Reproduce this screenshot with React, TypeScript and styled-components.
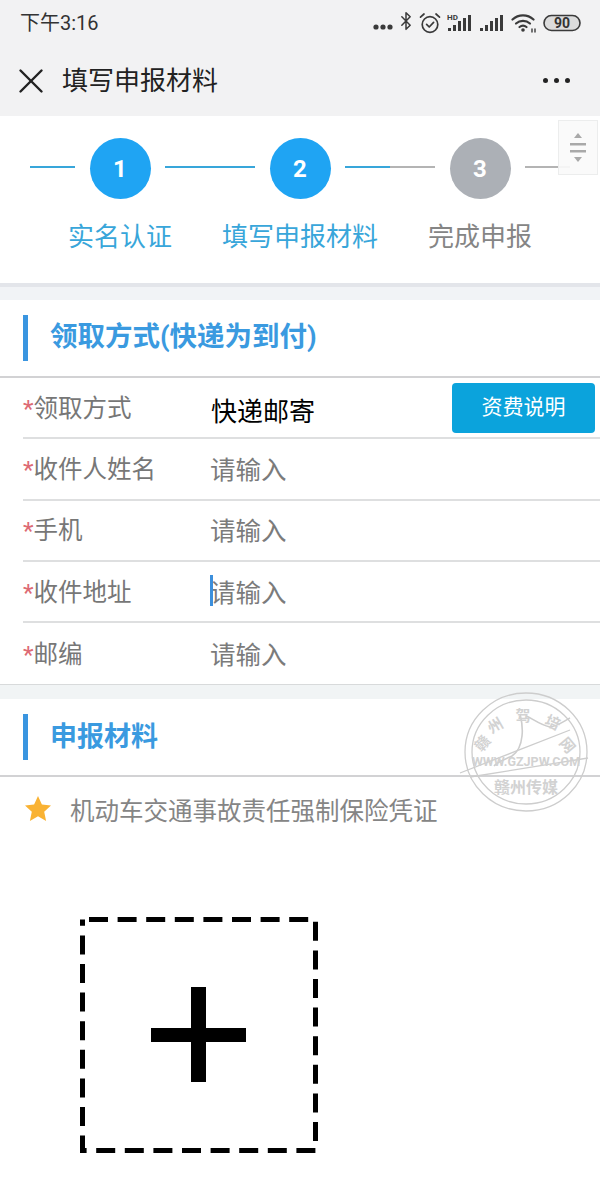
import React from 'react';
import styled, { createGlobalStyle } from 'styled-components';
import { Bluetooth, X } from 'lucide-react';

const GlobalStyle = createGlobalStyle`
    html, body {
        margin: 0;
        padding: 0;
        background: #fff;
    }
    * {
        box-sizing: border-box;
    }
    body {
        font-family: "Roboto", "Noto Sans CJK SC", sans-serif;
    }
`

const Page = styled.div`
    position: relative;
    width: 600px;
    height: 1200px;
    overflow: hidden;
    background: #fff;
    display: flex;
    flex-direction: column;
`

const Header = styled.header`
    background: #f2f2f3;
    height: 116px;
    flex: none;
`

const StatusBar = styled.div`
    height: 45px;
    padding: 0 19px 0 20px;
    display: flex;
    align-items: center;
    justify-content: space-between;
`

const Clock = styled.span`
    font-size: 20px;
    color: #333;
    margin-top: -2px;
`

const StatusIcons = styled.div`
    display: flex;
    align-items: center;
    color: #3a3a3a;
`

const IconGap = styled.span<{ $w: number }>`
    width: ${props => props.$w}px;
`

const BluetoothIcon = styled(Bluetooth)`
    margin: -3px 3px 0 3px;
`

const NavBar = styled.div`
    height: 71px;
    padding: 0 30px 0 20px;
    display: flex;
    align-items: center;
`

const CloseIcon = styled(X)`
    margin: 0 -10.5px;
    flex: none;
`

const NavTitle = styled.h1`
    margin: 0 0 0 21px;
    font-size: 26px;
    font-weight: 400;
    color: #222;
    flex: 1;
    line-height: 1;
`

const MoreDots = styled.div`
    display: flex;
    gap: 6px;
    span {
        width: 5px;
        height: 5px;
        border-radius: 50%;
        background: #222;
    }
`

const Steps = styled.section`
    height: 167px;
    flex: none;
    padding: 22px 30px 0;
    display: grid;
    grid-template-columns: repeat(3, 180px);
    align-items: start;
`

const Step = styled.div`
    display: flex;
    flex-direction: column;
    align-items: center;
`

const StepTrack = styled.div`
    width: 100%;
    height: 61px;
    display: flex;
    align-items: center;
    justify-content: space-between;
`

const StepLine = styled.i<{ $color: string }>`
    width: 45px;
    height: 2px;
    margin-top: -4px;
    background: ${props => props.$color};
`

const StepCircle = styled.div<{ $active: boolean }>`
    width: 61px;
    height: 61px;
    border-radius: 50%;
    background: ${props => props.$active ? '#1fa4f3' : '#acb0b6'};
    color: #fff;
    font-size: 24px;
    font-weight: 700;
    display: flex;
    align-items: center;
    justify-content: center;
`

const StepLabel = styled.div<{ $active: boolean }>`
    margin-top: 19px;
    font-size: 26px;
    line-height: 38px;
    color: ${props => props.$active ? '#38a6da' : '#858585'};
`

const Divider = styled.div`
    height: 17px;
    flex: none;
    background: #f1f3f6;
    border-top: 4px solid #e3e5ea;
`

const SectionHead = styled.div`
    height: 78px;
    flex: none;
    padding-left: 23px;
    display: flex;
    align-items: center;
    border-bottom: 2px solid #d2d2d4;
`

const SectionTitle = styled.h2<{ $size: number, $lift: number }>`
    margin: 0;
    padding: 0 0 ${props => props.$lift}px 22px;
    border-left: 5px solid #3a95e0;
    height: 46px;
    display: flex;
    align-items: center;
    font-size: ${props => props.$size}px;
    font-weight: 700;
    color: #3a9ae0;
    white-space: nowrap;
`

const Form = styled.div`
    padding-left: 23px;
    flex: none;
`

const Row = styled.div`
    height: 61.3px;
    display: flex;
    align-items: center;
    border-bottom: 2px solid #dedfe0;
    &:last-child {
        border-bottom: none;
    }
`

const Label = styled.label`
    width: 188px;
    flex: none;
    font-size: 24.5px;
    color: #777;
    margin-top: -3px;
    em {
        font-style: normal;
        color: #dd6a73;
    }
`

const Placeholder = styled.span<{ $focused?: boolean }>`
    position: relative;
    font-size: 25.5px;
    color: #7b7b7b;
    margin: -3px 0 0 -1px;
    ${props => props.$focused && `
        &::before {
            content: '';
            position: absolute;
            left: 0;
            top: 3px;
            width: 3px;
            height: 31px;
            background: #3c8fdc;
        }
    `}
`

const Value = styled.span`
    font-size: 26px;
    color: #000;
    margin-top: 4px;
    flex: 1;
`

const FeeButton = styled.button`
    width: 143px;
    height: 50px;
    margin: 0 5px 0 0;
    padding: 0 0 5px;
    border: none;
    border-radius: 4px;
    background: #0ba3dc;
    color: #fff;
    font-family: inherit;
    font-size: 21px;
`

const GapBand = styled.div`
    height: 15px;
    flex: none;
    background: #f1f4f5;
    border-top: 1px solid #d8dadb;
`

const MaterialRow = styled.div`
    height: 64px;
    flex: none;
    padding: 0 0 0 25px;
    display: flex;
    align-items: center;
    gap: 19px;
    font-size: 24.5px;
    color: #858585;
    white-space: nowrap;
`

const Uploader = styled.div`
    position: relative;
    width: 238px;
    height: 236px;
    margin: 76px 0 0 80px;
    flex: none;
`

const Plus = styled.div`
    position: absolute;
    left: 71px;
    top: 70px;
    width: 95px;
    height: 95px;
    &::before, &::after {
        content: '';
        position: absolute;
        background: #000;
    }
    &::before {
        left: 0;
        top: 41px;
        width: 95px;
        height: 14px;
    }
    &::after {
        left: 40px;
        top: 0;
        width: 15px;
        height: 95px;
    }
`

const ScrollHandle = styled.div`
    position: absolute;
    left: 558px;
    top: 120px;
    width: 40px;
    height: 55px;
    background: rgba(250, 250, 250, 0.92);
    border: 1px solid #eceded;
    display: flex;
    align-items: center;
    justify-content: center;
`

const Watermark = styled.svg`
    position: absolute;
    left: 456px;
    top: 690px;
    pointer-events: none;
`

const SignalBars = ({ hd }: { hd?: boolean }) => (
    <svg width="24" height="20" viewBox="0 0 24 20" fill="#3a3a3a">
        {hd && <text x="0" y="7" fontSize="8" fontWeight="700" fontFamily="Roboto, sans-serif">HD</text>}
        <rect x="1" y="15" width="3" height="3" />
        <rect x="6" y="12" width="3" height="6" />
        <rect x="11" y="8" width="3" height="10" />
        <rect x="16" y="5" width="3" height="13" />
        <rect x="21" y="2" width="3" height="16" />
    </svg>
)

const StatusDots = () => (
    <svg width="20" height="20" viewBox="0 0 20 20" fill="#3a3a3a">
        <circle cx="3" cy="14" r="2.6" />
        <circle cx="10" cy="14" r="2.6" />
        <circle cx="17" cy="14" r="2.6" />
    </svg>
)

const AlarmIcon = () => (
    <svg width="22" height="22" viewBox="0 0 22 22" fill="none" stroke="#3a3a3a" strokeWidth="1.7" strokeLinecap="round" strokeLinejoin="round">
        <circle cx="11" cy="12.5" r="7.8" />
        <path d="M7.6 12.4l2.6 2.6 4.4-4.6" />
        <path d="M1.5 5.2L5 2" />
        <path d="M20.5 5.2L17 2" />
    </svg>
)

const WifiIcon = () => (
    <svg width="25" height="20" viewBox="0 0 25 20" fill="none" stroke="#3a3a3a" strokeWidth="2.2" strokeLinecap="round">
        <path d="M1.5 6.5C7.5 1 16.5 1 22.5 6.5" />
        <path d="M5 10.5C9 7 15 7 19 10.5" />
        <path d="M8.5 14C10.5 12.4 13.5 12.4 15.5 14" />
        <circle cx="12" cy="17" r="1.8" fill="#3a3a3a" stroke="none" />
        <path d="M21 16v3M24 16v3" strokeWidth="1.4" />
    </svg>
)

const Battery = () => (
    <svg width="38" height="18" viewBox="0 0 38 18">
        <rect x="1" y="1.5" width="36" height="15" rx="7.5" fill="#dcdcdc" stroke="#3a3a3a" strokeWidth="1.6" />
        <text x="19" y="14" textAnchor="middle" fontSize="14" fontWeight="700" fill="#333" fontFamily="Roboto, sans-serif">90</text>
    </svg>
)

const steps = [
    { num: 1, label: '实名认证', active: true, left: '#38a6da', right: '#38a6da' },
    { num: 2, label: '填写申报材料', active: true, left: '#38a6da', right: '#38a6da' },
    { num: 3, label: '完成申报', active: false, left: '#b4b4b4', right: '#b4b4b4' },
]

const fields = [
    { label: '收件人姓名' },
    { label: '手机' },
    { label: '收件地址', focused: true },
    { label: '邮编' },
]

const App = () => {
    return (
        <Page>
            <GlobalStyle />
            <Header>
                <StatusBar>
                    <Clock>下午3:16</Clock>
                    <StatusIcons>
                        <StatusDots />
                        <BluetoothIcon size={20} strokeWidth={1.8} />
                        <AlarmIcon />
                        <IconGap $w={6} />
                        <SignalBars hd />
                        <IconGap $w={8} />
                        <SignalBars />
                        <IconGap $w={8} />
                        <WifiIcon />
                        <IconGap $w={7} />
                        <Battery />
                    </StatusIcons>
                </StatusBar>
                <NavBar>
                    <CloseIcon size={42} strokeWidth={1.4} color="#222" />
                    <NavTitle>填写申报材料</NavTitle>
                    <MoreDots><span /><span /><span /></MoreDots>
                </NavBar>
            </Header>

            <Steps>
                {steps.map(s => (
                    <Step key={s.num}>
                        <StepTrack>
                            <StepLine $color={s.left} />
                            <StepCircle $active={s.active}>{s.num}</StepCircle>
                            <StepLine $color={s.right} />
                        </StepTrack>
                        <StepLabel $active={s.active}>{s.label}</StepLabel>
                    </Step>
                ))}
            </Steps>

            <Divider />

            <SectionHead>
                <SectionTitle $size={27.5} $lift={9}>领取方式(快递为到付)</SectionTitle>
            </SectionHead>
            <Form>
                <Row>
                    <Label><em>*</em>领取方式</Label>
                    <Value>快递邮寄</Value>
                    <FeeButton>资费说明</FeeButton>
                </Row>
                {fields.map(f => (
                    <Row key={f.label}>
                        <Label><em>*</em>{f.label}</Label>
                        <Placeholder $focused={f.focused}>请输入</Placeholder>
                    </Row>
                ))}
            </Form>

            <GapBand />

            <SectionHead>
                <SectionTitle $size={27} $lift={5}>申报材料</SectionTitle>
            </SectionHead>
            <MaterialRow>
                <svg width="26" height="26" viewBox="0 0 26 26">
                    <path d="M13 0l3.900 8.500 9.100 1-6.800 6.200 1.900 9.300L13 20.300 4.900 25l1.900-9.300L0 9.500l9.100-1z" fill="#f9b233" />
                </svg>
                机动车交通事故责任强制保险凭证
            </MaterialRow>

            <Uploader>
                <svg width="238" height="236" viewBox="0 0 238 236">
                    <rect x="2.5" y="2.5" width="233" height="231" fill="none" stroke="#000" strokeWidth="5" strokeDasharray="19 9.6" strokeDashoffset="-6.5" />
                </svg>
                <Plus />
            </Uploader>

            <ScrollHandle>
                <svg width="16" height="30" viewBox="0 0 16 30" fill="#a9a9a9">
                    <path d="M8 0l4 5H4z" />
                    <rect x="0" y="10" width="16" height="2.5" />
                    <rect x="0" y="17" width="16" height="2.5" />
                    <path d="M8 29l-4-5h8z" />
                </svg>
            </ScrollHandle>

            <Watermark width="144" height="124" viewBox="0 0 144 124">
                <g fill="none" stroke="#cdcdcd" strokeWidth="1.3">
                    <ellipse cx="70" cy="62" rx="61" ry="59" />
                    <ellipse cx="70" cy="62" rx="54" ry="52" />
                    <path d="M64 24c2 8 3 14 2 22-1 10-4 16-10 20-6 3-14 5-18 10" strokeWidth="1.6" />
                    <path d="M70 26c6 2 12 8 24 11 8-1 14-6 20-9" strokeWidth="1.6" />
                    <path d="M4 83L114 40" />
                    <path d="M14 87L132 68" />
                </g>
                <g fill="#d2d2d2" fontWeight="700" fontFamily="'Noto Sans CJK SC', sans-serif" textAnchor="middle">
                    <text x="26" y="59" fontSize="15" transform="rotate(-50 26 53)">赣</text>
                    <text x="39" y="41" fontSize="15" transform="rotate(-30 39 35)">州</text>
                    <text x="67" y="31" fontSize="15">驾</text>
                    <text x="97" y="38" fontSize="15" transform="rotate(25 97 32)">培</text>
                    <text x="112" y="61" fontSize="15" transform="rotate(50 112 55)">网</text>
                    <text x="70" y="76" fontSize="12.5" fontFamily="Roboto, sans-serif">WWW.GZJPW.COM</text>
                    <text x="70" y="103" fontSize="16">赣州传媒</text>
                </g>
            </Watermark>
        </Page>
    )
}

export default App
